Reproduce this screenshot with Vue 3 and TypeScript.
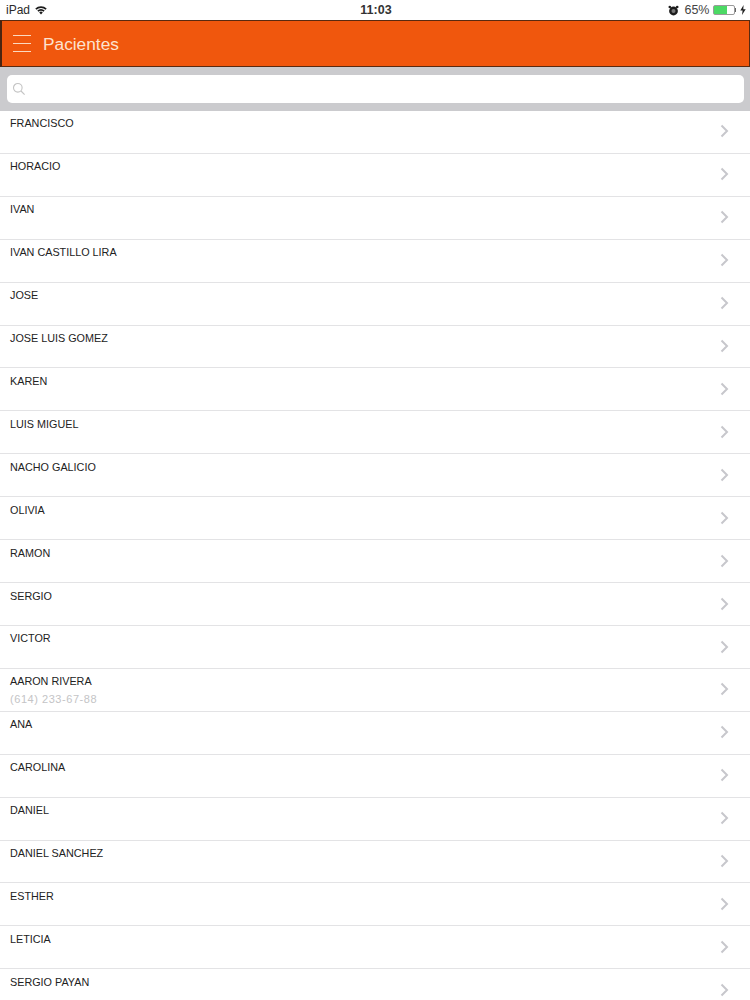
<script setup lang="ts">
interface Patient { name: string; phone?: string }
const patients: Patient[] = [
  { name: 'FRANCISCO' }, { name: 'HORACIO' }, { name: 'IVAN' }, { name: 'IVAN CASTILLO LIRA' },
  { name: 'JOSE' }, { name: 'JOSE LUIS GOMEZ' }, { name: 'KAREN' }, { name: 'LUIS MIGUEL' },
  { name: 'NACHO GALICIO' }, { name: 'OLIVIA' }, { name: 'RAMON' }, { name: 'SERGIO' },
  { name: 'VICTOR' }, { name: 'AARON RIVERA', phone: '(614) 233-67-88' }, { name: 'ANA' },
  { name: 'CAROLINA' }, { name: 'DANIEL' }, { name: 'DANIEL SANCHEZ' }, { name: 'ESTHER' },
  { name: 'LETICIA' }, { name: 'SERGIO PAYAN' }
]
</script>

<template>
  <div class="screen">
    <div class="status">
      <div class="status-left">
        <span>iPad</span>
        <svg class="wifi" width="12" height="10" viewBox="0 0 13 10">
          <path d="M0.3 3.4A8.8 8.8 0 0 1 12.7 3.4L11.4 4.8A6.9 6.9 0 0 0 1.6 4.8Z" fill="#1c1c1c" />
          <path d="M2.5 5.6A5.7 5.7 0 0 1 10.5 5.6L9.2 7A3.9 3.9 0 0 0 3.8 7Z" fill="#1c1c1c" />
          <path d="M4.6 7.7A2.7 2.7 0 0 1 8.4 7.7L6.5 9.8Z" fill="#1c1c1c" />
        </svg>
      </div>
      <div class="status-time">11:03</div>
      <div class="status-right">
        <svg width="11" height="11" viewBox="0 0 11 11">
          <circle cx="5.5" cy="6" r="4.4" fill="#1c1c1c" />
          <circle cx="5.5" cy="6" r="2" fill="#777" />
          <circle cx="1.8" cy="2" r="1.3" fill="#1c1c1c" />
          <circle cx="9.2" cy="2" r="1.3" fill="#1c1c1c" />
        </svg>
        <span class="pct">65%</span>
        <div class="battery"><div class="battery-fill"></div></div>
        <div class="battery-tip"></div>
        <svg class="bolt" width="6" height="10" viewBox="0 0 6 10">
          <path d="M3.6 0L0.3 5.6H2.6L2 10L5.7 4.2H3.3Z" fill="#222" />
        </svg>
      </div>
    </div>

    <header class="nav">
      <div class="burger"><span></span><span></span><span></span></div>
      <div class="title">Pacientes</div>
    </header>

    <div class="search-wrap">
      <div class="search">
        <svg width="14" height="14" viewBox="0 0 14 14" fill="none" stroke="#c4c4c4" stroke-width="1.1">
          <circle cx="5.8" cy="5.8" r="4.3" />
          <path d="M9 9L12.6 12.6" />
        </svg>
      </div>
    </div>

    <ul class="list">
      <li v-for="p in patients" :key="p.name" class="row">
        <div class="text">
          <div class="name">{{ p.name }}</div>
          <div v-if="p.phone" class="phone">{{ p.phone }}</div>
        </div>
        <svg class="chevron" width="9" height="14" viewBox="0 0 9 14" fill="none" stroke="#c7c7cc" stroke-width="2">
          <path d="M1.5 1.5L7 7L1.5 12.5" />
        </svg>
      </li>
    </ul>
  </div>
</template>

<style>
html, body { margin: 0; background: #fff; overflow: hidden; }
</style>

<style scoped>
.screen {
  width: 750px;
  height: 1000px;
  overflow: hidden;
  background: #fff;
  font-family: "Liberation Sans", Arial, sans-serif;
  display: flex;
  flex-direction: column;
}
.status {
  height: 20px;
  flex: none;
  padding: 0 4px 0 6px;
  display: grid;
  grid-template-columns: 1fr auto 1fr;
  align-items: center;
  font-size: 12px;
  color: #2a2a2a;
}
.status-left { display: flex; align-items: center; gap: 5px; }
.status-time { font-weight: 700; font-size: 12.5px; color: #333; }
.status-right { display: flex; align-items: center; justify-content: flex-end; }
.pct { margin-left: 5px; font-size: 12.5px; color: #444; }
.battery {
  margin-left: 3px;
  width: 22px;
  height: 10px;
  box-sizing: border-box;
  border: 1px solid #9a9a9a;
  border-radius: 2px;
  background: #fff;
}
.battery-fill { width: 13px; height: 100%; background: #4cd964; }
.battery-tip { width: 1.5px; height: 4px; background: #666; }
.bolt { margin-left: 4px; }
.nav {
  height: 47px;
  flex: none;
  box-sizing: border-box;
  background: #f0570d;
  border: 1px solid #5a2a10;
  border-left: 2px solid #4a2410;
  display: flex;
  align-items: center;
  padding-left: 11px;
}
.burger { width: 18px; display: flex; flex-direction: column; gap: 7px; }
.burger span { display: block; height: 1px; background: #fbd9c0; }
.title { margin: 1px 0 0 12px; font-size: 17.3px; color: #fde3cf; }
.search-wrap {
  height: 43.9px;
  flex: none;
  box-sizing: border-box;
  background: #cbcbce;
  padding: 8px 6px 8px 7px;
}
.search {
  height: 100%;
  background: #fff;
  border-radius: 5px;
  display: flex;
  align-items: center;
  padding-left: 5px;
}
.list { list-style: none; margin: 0; padding: 0; }
.row {
  height: 42.93px;
  box-sizing: border-box;
  border-bottom: 1px solid #e3e3e5;
  padding: 6.5px 21px 0 10px;
  display: flex;
  justify-content: space-between;
}
.name { font-size: 10.8px; line-height: 12px; color: #222; }
.phone { margin-top: 6px; font-size: 11px; line-height: 12px; letter-spacing: 0.55px; color: #c4c4c6; }
.chevron { margin-top: 7.1px; }
</style>
